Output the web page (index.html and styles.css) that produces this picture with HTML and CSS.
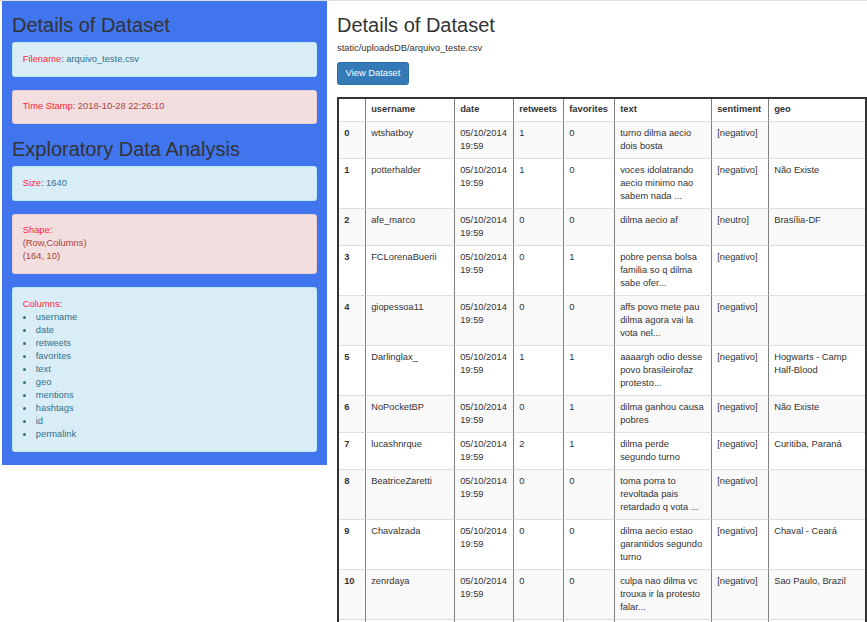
FILE: index.html
```html
<!DOCTYPE html>
<html lang="en">
<head>
<meta charset="utf-8">
<title>Details of Dataset</title>
<link rel="stylesheet" href="styles.css">
</head>
<body>
<div class="page">
  <aside class="sidebar">
    <h2 class="title">Details of Dataset</h2>
    <div class="alert info"><span class="key">Filename</span>: arquivo_teste.csv</div>
    <div class="alert danger"><span class="key">Time Stamp</span>: 2018-10-28 22:26:10</div>
    <h2 class="title second">Exploratory Data Analysis</h2>
    <div class="alert info"><span class="key">Size</span>: 1640</div>
    <div class="alert danger"><span class="key">Shape:</span><br>(Row,Columns)<br>(164, 10)</div>
    <div class="alert info"><span class="key">Columns</span>:
      <ul class="cols">
        <li>username</li>
        <li>date</li>
        <li>retweets</li>
        <li>favorites</li>
        <li>text</li>
        <li>geo</li>
        <li>mentions</li>
        <li>hashtags</li>
        <li>id</li>
        <li>permalink</li>
      </ul>
    </div>
  </aside>
  <main class="main">
    <h2 class="title">Details of Dataset</h2>
    <p class="path">static/uploadsDB/arquivo_teste.csv</p>
    <button class="btn" type="button">View Dataset</button>
    <table class="data">
      <thead>
        <tr>
          <th class="c-idx"></th>
          <th class="c-user">username</th>
          <th class="c-date">date</th>
          <th class="c-rt">retweets</th>
          <th class="c-fav">favorites</th>
          <th class="c-text">text</th>
          <th class="c-sent">sentiment</th>
          <th class="c-geo">geo</th>
        </tr>
      </thead>
      <tbody>
        <tr><th>0</th><td>wtshatboy</td><td>05/10/2014 19:59</td><td>1</td><td>0</td><td>turno dilma aecio dois bosta</td><td>[negativo]</td><td></td></tr>
        <tr><th>1</th><td>potterhalder</td><td>05/10/2014 19:59</td><td>1</td><td>0</td><td>voces idolatrando aecio minimo nao sabem nada ...</td><td>[negativo]</td><td>Não Existe</td></tr>
        <tr><th>2</th><td>afe_marco</td><td>05/10/2014 19:59</td><td>0</td><td>0</td><td>dilma aecio af</td><td>[neutro]</td><td>Brasília-DF</td></tr>
        <tr><th>3</th><td>FCLorenaBuerii</td><td>05/10/2014 19:59</td><td>0</td><td>1</td><td>pobre pensa bolsa familia so q dilma sabe ofer...</td><td>[negativo]</td><td></td></tr>
        <tr><th>4</th><td>giopessoa11</td><td>05/10/2014 19:59</td><td>0</td><td>0</td><td>affs povo mete pau dilma agora vai la vota nel...</td><td>[negativo]</td><td></td></tr>
        <tr><th>5</th><td>Darlinglax_</td><td>05/10/2014 19:59</td><td>1</td><td>1</td><td>aaaargh odio desse povo brasileirofaz protesto...</td><td>[negativo]</td><td>Hogwarts - Camp Half-Blood</td></tr>
        <tr><th>6</th><td>NoPocketBP</td><td>05/10/2014 19:59</td><td>0</td><td>1</td><td>dilma ganhou causa pobres</td><td>[negativo]</td><td>Não Existe</td></tr>
        <tr><th>7</th><td>lucashnrque</td><td>05/10/2014 19:59</td><td>2</td><td>1</td><td>dilma perde segundo turno</td><td>[negativo]</td><td>Curitiba, Paraná</td></tr>
        <tr><th>8</th><td>BeatriceZaretti</td><td>05/10/2014 19:59</td><td>0</td><td>0</td><td>toma porra to revoltada pais retardado q vota ...</td><td>[negativo]</td><td></td></tr>
        <tr><th>9</th><td>Chavalzada</td><td>05/10/2014 19:59</td><td>0</td><td>0</td><td>dilma aecio estao garantidos segundo turno</td><td>[negativo]</td><td>Chaval - Ceará</td></tr>
        <tr><th>10</th><td>zenrdaya</td><td>05/10/2014 19:59</td><td>0</td><td>0</td><td>culpa nao dilma vc trouxa ir la protesto falar...</td><td>[negativo]</td><td>Sao Paulo, Brazil</td></tr>
        <tr class="next"><th></th><td></td><td></td><td></td><td></td><td></td><td></td><td></td></tr>
      </tbody>
    </table>
  </main>
</div>
</body>
</html>
```

FILE: styles.css
```css
html, body {
  margin: 0;
  padding: 0;
}

body {
  font-family: "Liberation Sans", Arial, Helvetica, sans-serif;
  font-size: 9.33px;
  line-height: 13px;
  color: #333;
  background: #fff;
  border-top: 1px solid #dedede;
  overflow: hidden;
}

.page {
  display: flex;
  align-items: flex-start;
}

.sidebar {
  width: 324.7px;
  margin-left: 2px;
  padding: 0 10px;
  box-sizing: border-box;
  background: #4075ee;
  flex: none;
}

.title {
  font-size: 20px;
  line-height: 1.1;
  font-weight: normal;
  margin: 12.5px 0 6.5px;
  color: #333;
}

.title.second {
  margin-top: 13.5px;
}

.alert {
  padding: 9.75px;
  margin-bottom: 13px;
  border: 1px solid transparent;
  border-radius: 2.6px;
}

.alert.info {
  background: #d9edf7;
  border-color: #bce8f1;
  color: #31708f;
}

.alert.danger {
  background: #f2dede;
  border-color: #ebccd1;
  color: #a94442;
}

.key {
  color: #ff1f3d;
}

.cols {
  list-style: none;
  margin: 0;
  padding: 0;
}

.cols li {
  display: flex;
  align-items: center;
}

.cols li::before {
  content: "";
  width: 3px;
  height: 3px;
  border-radius: 50%;
  background: #31708f;
  margin: 1px 10px 0 0;
  flex: none;
}

.main {
  flex: 1;
  padding-left: 10.3px;
  min-width: 0;
}

.path {
  margin: 0 0 7px;
}

.btn {
  display: block;
  font-family: inherit;
  font-size: 9.33px;
  line-height: 13px;
  padding: 3.9px 7.6px;
  color: #fff;
  background: #337ab7;
  border: 1px solid #2e6da4;
  border-radius: 2.6px;
  margin: 0 0 12.2px;
  cursor: pointer;
}

.data {
  box-sizing: border-box;
  width: 530px;
  table-layout: fixed;
  border-collapse: separate;
  border-spacing: 0;
  border: 2px solid #333;
}

.data th,
.data td {
  box-sizing: border-box;
  padding: 5px 5.2px;
  text-align: left;
  vertical-align: top;
  border-right: 1px solid #808080;
  line-height: 13px;
}

.data th:last-child,
.data td:last-child {
  border-right: 0;
}

.data thead th {
  font-weight: bold;
  padding-top: 4.5px;
  padding-bottom: 4.5px;
  border-bottom: 1px solid #ddd;
  vertical-align: bottom;
}

.data tbody th,
.data tbody td {
  border-top: 1px solid #ddd;
}

.data tbody tr:first-child th,
.data tbody tr:first-child td {
  border-top: 0;
}

.data tbody th {
  font-weight: bold;
}

.data tbody tr:nth-child(odd) {
  background: #f9f9f9;
}

.data tbody tr.next th,
.data tbody tr.next td {
  height: 24px;
}

.c-idx { width: 27px; }
.c-user { width: 89px; }
.c-date { width: 59px; }
.c-rt { width: 50px; }
.c-fav { width: 51px; }
.c-text { width: 97px; }
.c-sent { width: 57px; }
.c-geo { width: 96px; }
```
